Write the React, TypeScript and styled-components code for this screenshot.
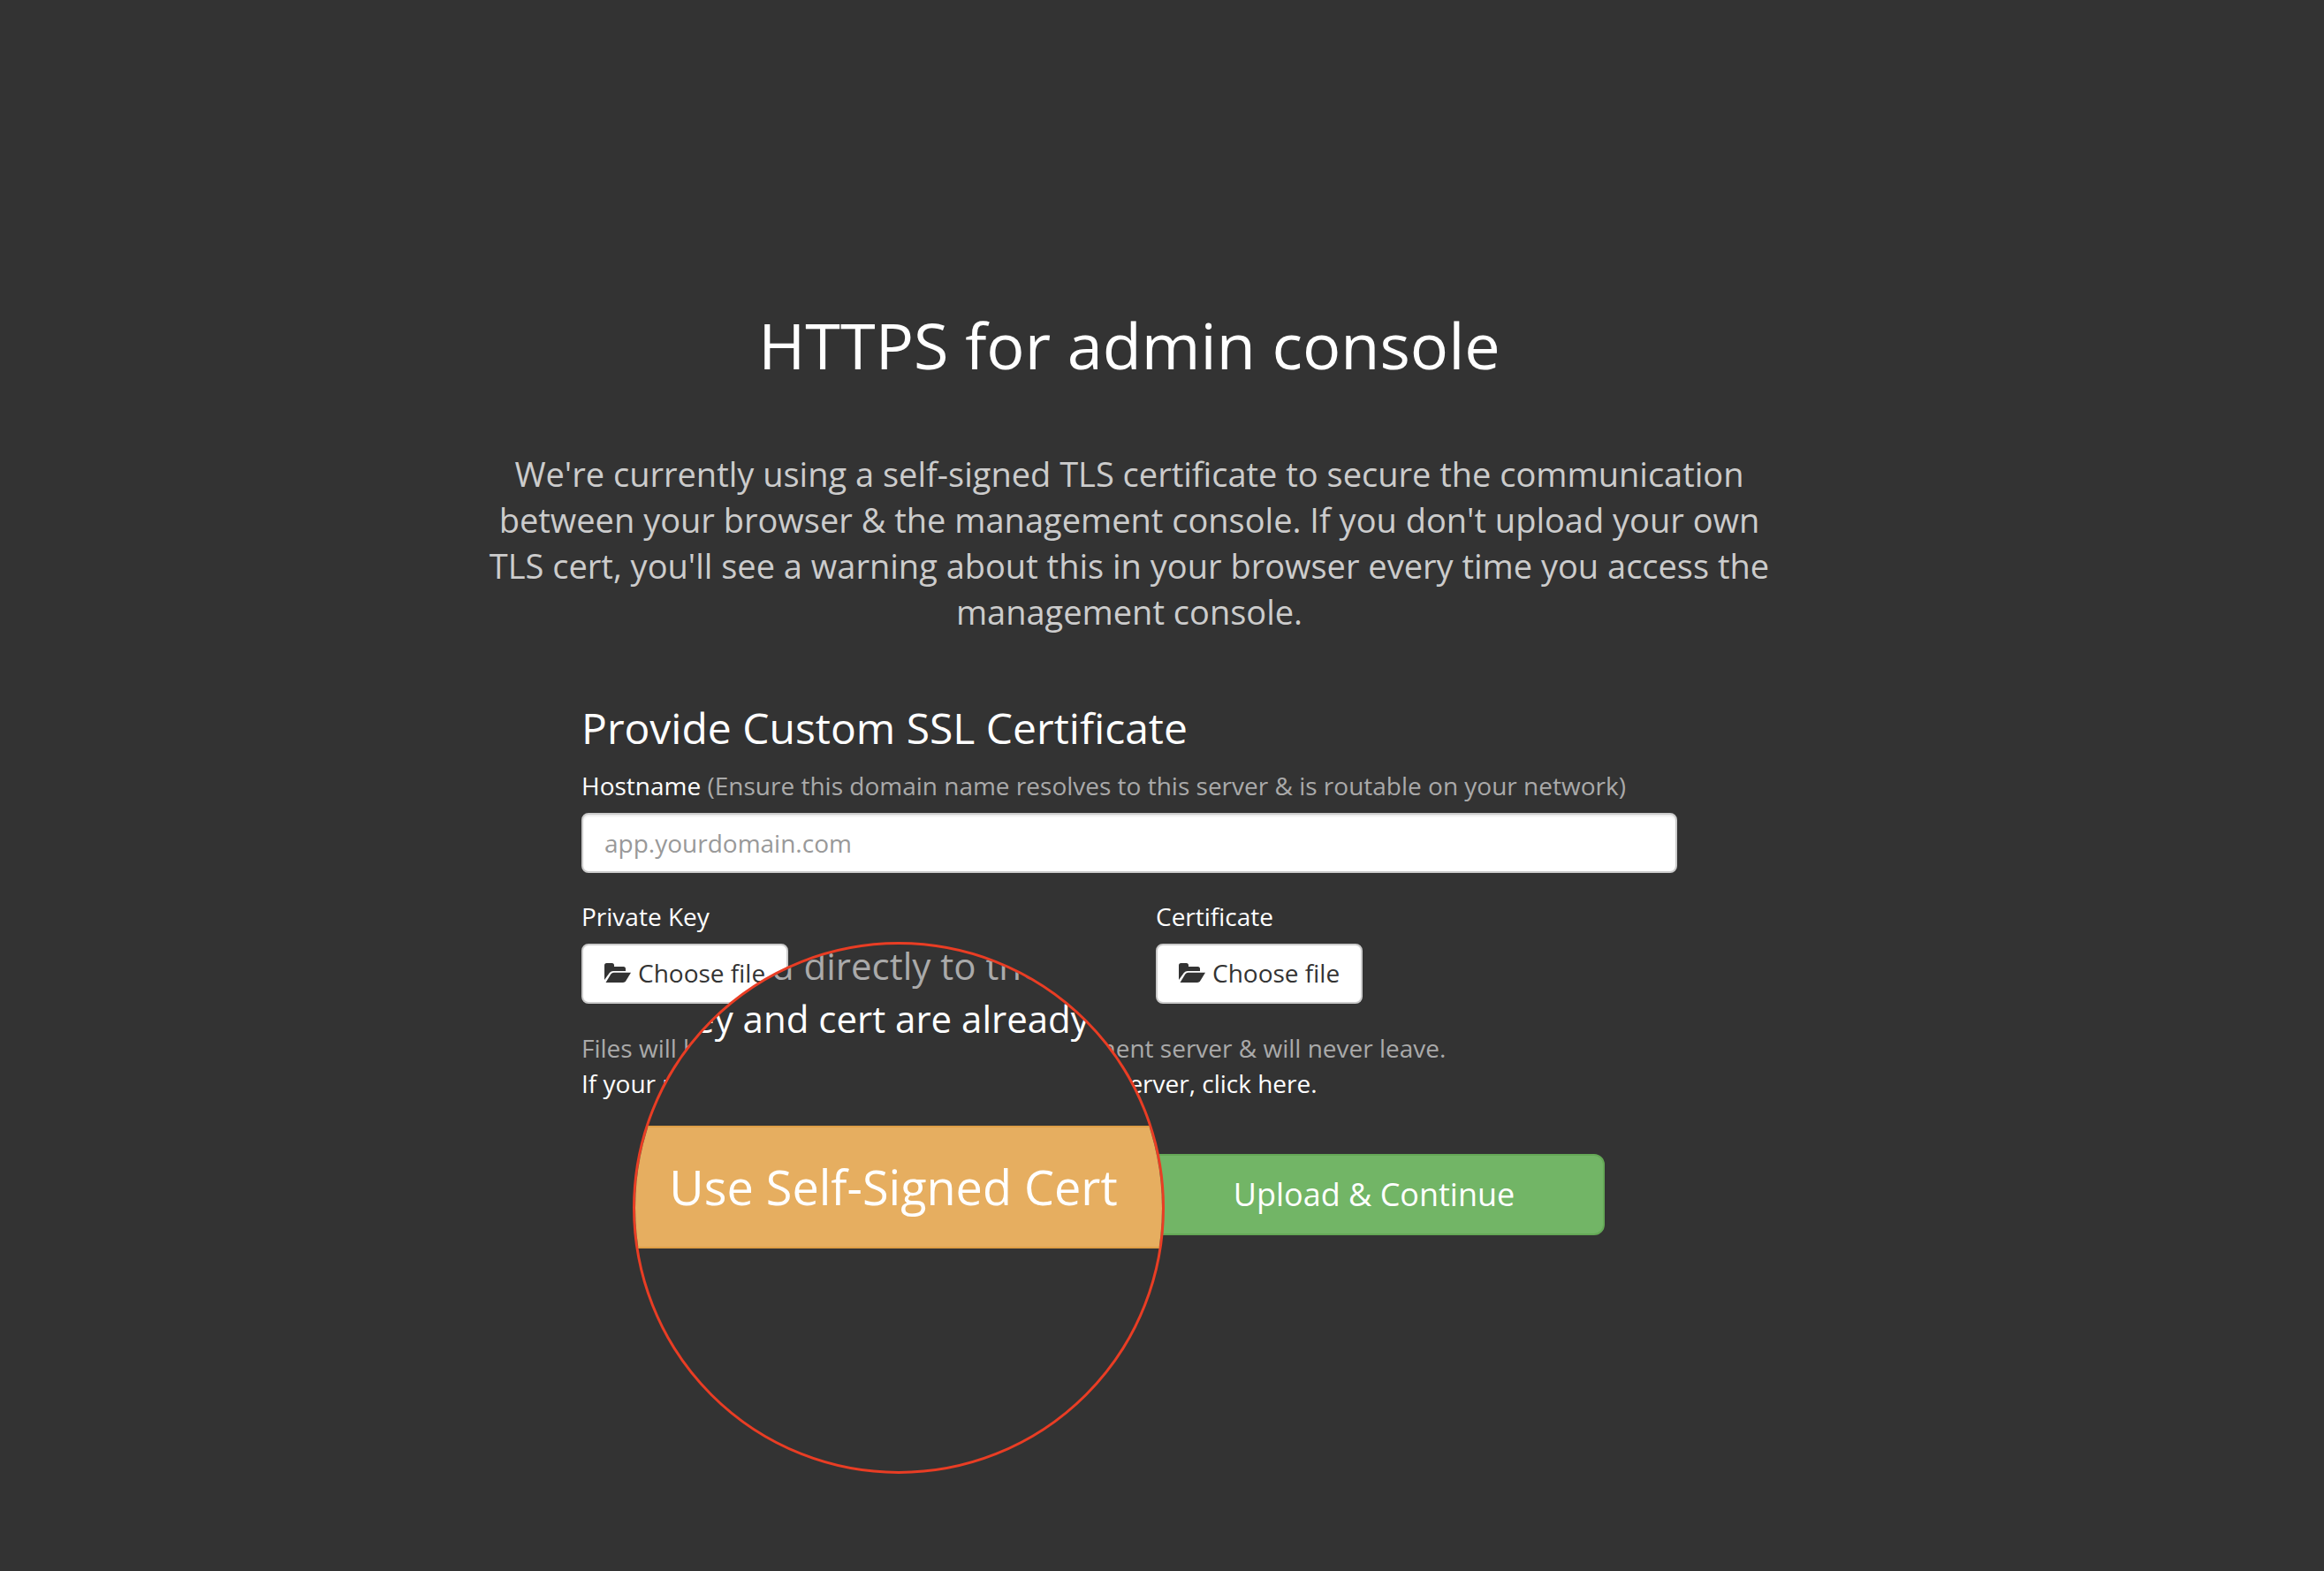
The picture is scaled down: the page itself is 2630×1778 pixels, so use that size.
import React from "react";
import styled, { createGlobalStyle } from "styled-components";

const GlobalStyle = createGlobalStyle`
  *, *::before, *::after { box-sizing: border-box; }
  body {
    margin: 0;
    background: #333;
    color: #fff;
    font-family: "Open Sans", sans-serif;
    font-size: 28px;
    line-height: 40px;
  }
  input, button { font: inherit; }
`;

const Page = styled.main`
  display: flex;
  flex-direction: column;
  align-items: center;
  min-height: 100vh;
  padding: 342px 104px 0 30px;
`;

const Title = styled.h1`
  margin: 0 0 72px;
  font-size: 72px;
  line-height: 96px;
  font-weight: 400;
  text-align: center;
`;

const Lead = styled.p`
  max-width: 1500px;
  margin: 0 0 80px;
  padding: 0 20px;
  color: #ccc;
  font-size: 38px;
  line-height: 52px;
  text-align: center;
`;

const Form = styled.form`
  position: relative;
  width: 100%;
  max-width: 1240px;
`;

const Heading = styled.h2`
  margin: 0 0 20px;
  font-size: 48px;
  line-height: 52px;
  font-weight: 400;
`;

const Label = styled.label`
  display: block;
  margin-bottom: 12px;
  line-height: 38px;
  cursor: pointer;
`;

const Muted = styled.span`
  color: #aaa;
`;

const TextInput = styled.input`
  display: block;
  width: 100%;
  height: 68px;
  margin-bottom: 30px;
  padding: 12px 24px;
  border: 2px solid #ccc;
  border-radius: 8px;
  background: #fff;
  box-shadow: inset 0 2px 2px rgba(0, 0, 0, 0.075);
  color: #555;
  &::placeholder { color: #999; opacity: 1; }
`;

const Columns = styled.div`
  display: grid;
  grid-template-columns: 1fr 1fr;
  gap: 60px;
  margin-bottom: 30px;
`;

const FileButton = styled.button`
  display: flex;
  align-items: center;
  gap: 8px;
  height: 68px;
  padding: 0 24px 2px;
  border: 2px solid #ccc;
  border-radius: 8px;
  background: #fff;
  color: #333;
  cursor: pointer;
`;

const Note = styled.p`
  margin: 0;
`;

const NoteLink = styled.a`
  color: #fff;
  text-decoration: none;
`;

const Actions = styled.div`
  display: grid;
  grid-template-columns: 1fr 1fr;
  gap: 32px;
  margin-top: 60px;
  padding: 0 82px;
`;

const ActionButton = styled.button<{ $fill: string; $edge: string }>`
  height: 92px;
  border: 2px solid ${(p) => p.$edge};
  border-radius: 12px;
  background: ${(p) => p.$fill};
  color: #fff;
  font-size: 36px;
  cursor: pointer;
`;

const Lens = styled.div`
  position: absolute;
  left: 58px;
  bottom: -270px;
  width: 602px;
  height: 602px;
  overflow: hidden;
  border: 3px solid #e93d24;
  border-radius: 50%;
  background: #333;
  pointer-events: none;
`;

const LensView = styled.div`
  display: flex;
  flex-direction: column;
  margin-top: -6px;
`;

const LensLine = styled.div<{ $indent: number; $tone: string }>`
  text-indent: ${(p) => p.$indent}px;
  color: ${(p) => p.$tone};
  font-size: 42px;
  line-height: 60px;
  white-space: nowrap;
`;

const LensBand = styled.div`
  margin-top: 91px;
  padding-right: 12px;
  border: solid #df9f47;
  border-width: 2px 0;
  background: #e6ae60;
  font-size: 54px;
  line-height: 135px;
  text-align: center;
`;

function FolderOpen() {
  return (
    <svg width="30" height="24" viewBox="0 0 30 24" fill="currentColor" aria-hidden="true">
      <path d="M0 20V3.500Q0 1 2.500 1H8.500Q11 1 11 3.500V5H21.500Q24 5 24 7.500V10H10Q7.500 10 5.800 12Z" />
      <path d="M1.500 23L7.300 13.500Q8.500 11.700 10.500 11.700H30L24.200 21.300Q23.100 23 21 23Z" />
    </svg>
  );
}

function FileField({ id, label }: { id: string; label: string }) {
  return (
    <div>
      <Label htmlFor={id}>{label}</Label>
      <FileButton id={id} type="button">
        <FolderOpen />
        Choose file
      </FileButton>
    </div>
  );
}

export default function App() {
  return (
    <>
      <GlobalStyle />
      <Page>
        <Title>HTTPS for admin console</Title>
        <Lead>
          We're currently using a self-signed TLS certificate to secure the communication between
          your browser &amp; the management console. If you don't upload your own TLS cert, you'll
          see a warning about this in your browser every time you access the management console.
        </Lead>
        <Form>
          <Heading>Provide Custom SSL Certificate</Heading>
          <Label htmlFor="hostname">
            Hostname{" "}
            <Muted>(Ensure this domain name resolves to this server &amp; is routable on your network)</Muted>
          </Label>
          <TextInput id="hostname" type="text" placeholder="app.yourdomain.com" />
          <Columns>
            <FileField id="private-key" label="Private Key" />
            <FileField id="certificate" label="Certificate" />
          </Columns>
          <Note>
            <Muted>Files will be uploaded directly to the management server &amp; will never leave.</Muted>
          </Note>
          <Note>
            <NoteLink href="#server-files">
              If your private key and cert are already on this server, click here.
            </NoteLink>
          </Note>
          <Actions>
            <ActionButton type="button" $fill="#e6ae60" $edge="#df9f47">
              Use Self-Signed Cert
            </ActionButton>
            <ActionButton type="submit" $fill="#72b566" $edge="#64a856">
              Upload &amp; Continue
            </ActionButton>
          </Actions>
          <Lens aria-hidden="true">
            <LensView>
              <LensLine $indent={-6} $tone="#aaa">uploaded directly to the</LensLine>
              <LensLine $indent={44} $tone="#fff">key and cert are already</LensLine>
              <LensBand>Use Self-Signed Cert</LensBand>
            </LensView>
          </Lens>
        </Form>
      </Page>
    </>
  );
}
